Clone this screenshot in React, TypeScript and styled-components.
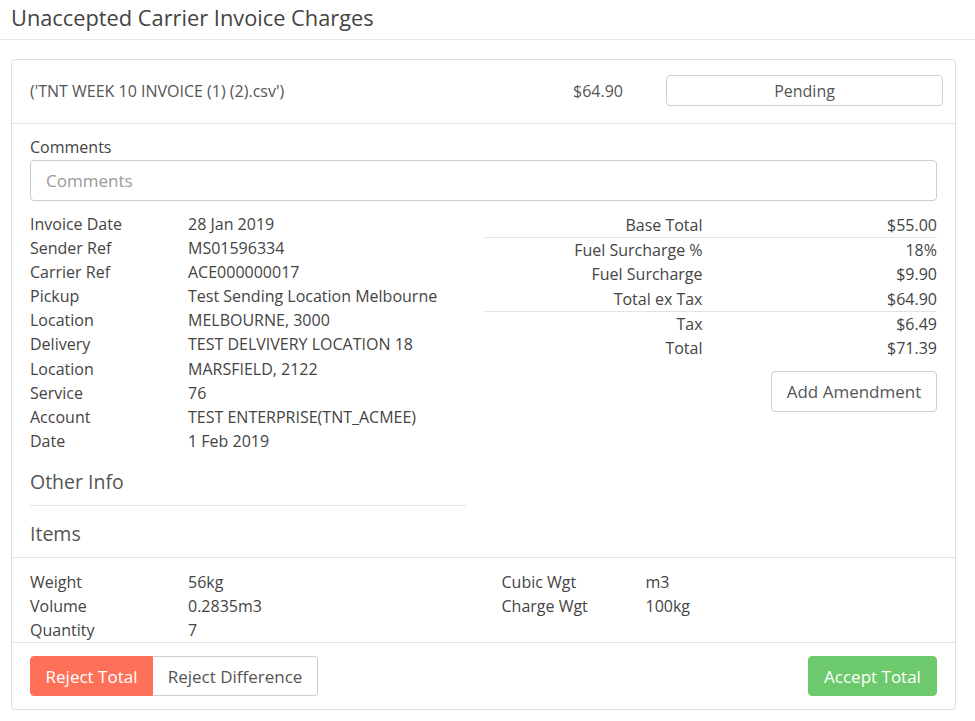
import styled, { createGlobalStyle } from "styled-components";

const GlobalStyle = createGlobalStyle`
  body {
    margin: 0;
    background: #ffffff;
    font-family: "Open Sans", "Liberation Sans", sans-serif;
    color: #555555;
  }
  * { box-sizing: border-box; }
`;

interface IDetail {
  label: string;
  value: string;
}

const details: IDetail[] = [
  { label: "Invoice Date", value: "28 Jan 2019" },
  { label: "Sender Ref", value: "MS01596334" },
  { label: "Carrier Ref", value: "ACE000000017" },
  { label: "Pickup", value: "Test Sending Location Melbourne" },
  { label: "Location", value: "MELBOURNE, 3000" },
  { label: "Delivery", value: "TEST DELVIVERY LOCATION 18" },
  { label: "Location", value: "MARSFIELD, 2122" },
  { label: "Service", value: "76" },
  { label: "Account", value: "TEST ENTERPRISE(TNT_ACMEE)" },
  { label: "Date", value: "1 Feb 2019" },
];

// groups split by a thin rule
const totals: IDetail[][] = [
  [{ label: "Base Total", value: "$55.00" }],
  [
    { label: "Fuel Surcharge %", value: "18%" },
    { label: "Fuel Surcharge", value: "$9.90" },
    { label: "Total ex Tax", value: "$64.90" },
  ],
  [
    { label: "Tax", value: "$6.49" },
    { label: "Total", value: "$71.39" },
  ],
];

const itemsLeft: IDetail[] = [
  { label: "Weight", value: "56kg" },
  { label: "Volume", value: "0.2835m3" },
  { label: "Quantity", value: "7" },
];

const itemsRight: IDetail[] = [
  { label: "Cubic Wgt", value: "m3" },
  { label: "Charge Wgt", value: "100kg" },
];

const App = () => {
  return (
    <>
      <GlobalStyle />
      <PageHeader>
        <Title>Unaccepted Carrier Invoice Charges</Title>
      </PageHeader>
      <Wrapper>
        <Card>
          <CardHeader>
            <FileName>('TNT WEEK 10 INVOICE (1) (2).csv')</FileName>
            <Amount>$64.90</Amount>
            <StatusButton>Pending</StatusButton>
          </CardHeader>

          <CardBody>
            <FieldLabel>Comments</FieldLabel>
            <CommentInput placeholder="Comments" />

            <Columns>
              <LeftCol>
                {details.map((d, i) => (
                  <DetailRow key={i} labelWidth={158}>
                    <span>{d.label}</span>
                    <span>{d.value}</span>
                  </DetailRow>
                ))}
                <SubHeading bordered>Other Info</SubHeading>
                <SubHeading>Items</SubHeading>
              </LeftCol>

              <RightCol>
                {totals.map((group, gi) => (
                  <TotalsGroup key={gi} first={gi === 0}>
                    {group.map((t) => (
                      <TotalRow key={t.label}>
                        <span>{t.label}</span>
                        <span>{t.value}</span>
                      </TotalRow>
                    ))}
                  </TotalsGroup>
                ))}
                <AmendRow>
                  <OutlineButton>Add Amendment</OutlineButton>
                </AmendRow>
              </RightCol>
            </Columns>
          </CardBody>

          <ItemsSection>
            <ItemsCol>
              {itemsLeft.map((d) => (
                <DetailRow key={d.label} labelWidth={158}>
                  <span>{d.label}</span>
                  <span>{d.value}</span>
                </DetailRow>
              ))}
            </ItemsCol>
            <ItemsCol indent>
              {itemsRight.map((d) => (
                <DetailRow key={d.label} labelWidth={144}>
                  <span>{d.label}</span>
                  <span>{d.value}</span>
                </DetailRow>
              ))}
            </ItemsCol>
          </ItemsSection>

          <CardFooter>
            <ButtonGroup>
              <ActionButton variant="danger">Reject Total</ActionButton>
              <ActionButton variant="plain">Reject Difference</ActionButton>
            </ButtonGroup>
            <ActionButton variant="success">Accept Total</ActionButton>
          </CardFooter>
        </Card>
      </Wrapper>
    </>
  );
};

const PageHeader = styled.div`
  height: 40px;
  padding: 0 11px;
  border-bottom: 1px solid #e6e6e6;
  display: flex;
  align-items: center;
`;

const Title = styled.h1`
  margin: 0 0 4px 0;
  font-size: 21.8px;
  font-weight: 400;
  line-height: 28px;
  color: #444;
`;

const Wrapper = styled.div`
  padding: 19px 19px 12px 11px;
`;

const Card = styled.div`
  border: 1px solid #dedede;
  border-radius: 4px;
  background: #fff;
`;

const CardHeader = styled.div`
  height: 64px;
  display: flex;
  align-items: center;
  padding: 0 12px 2px 18px;
  border-bottom: 1px solid #e3e3e3;
  font-size: 16px;
`;

const FileName = styled.div`
  flex: 1;
`;

const Amount = styled.div`
  margin-right: 43px;
`;

const StatusButton = styled.button`
  width: 277px;
  height: 31px;
  border: 1px solid #cfcfcf;
  border-radius: 4px;
  background: #fff;
  font-family: inherit;
  font-size: 16px;
  color: #555;
`;

const CardBody = styled.div`
  padding: 13px 18px 0 18px;
  border-bottom: 1px solid #e3e3e3;
`;

const FieldLabel = styled.div`
  font-size: 16px;
  line-height: 20px;
  color: #444;
`;

const CommentInput = styled.input`
  display: block;
  width: 100%;
  height: 41px;
  margin-top: 3px;
  padding: 0 15px;
  border: 1px solid #cdcdcd;
  border-radius: 4px;
  font-family: inherit;
  font-size: 17px;
  color: #555;
  &::placeholder {
    color: #9a9a9a;
  }
`;

const Columns = styled.div`
  display: grid;
  grid-template-columns: 1fr 1fr;
  margin-top: 11px;
`;

const LeftCol = styled.div`
  padding-right: 18px;
`;

const RightCol = styled.div`
  padding-top: 1px;
`;

const DetailRow = styled.div<{ labelWidth: number }>`
  display: grid;
  grid-template-columns: ${(p) => p.labelWidth}px 1fr;
  font-size: 16px;
  line-height: 24.1px;
  color: #444;
`;

const SubHeading = styled.h3<{ bordered?: boolean }>`
  margin: 0;
  font-size: 19.5px;
  font-weight: 400;
  line-height: 26px;
  color: #555;
  padding: ${(p) => (p.bordered ? "16px 0 10px" : "15px 0 10px")};
  border-bottom: ${(p) => (p.bordered ? "1px solid #e3e3e3" : "none")};
`;

const TotalsGroup = styled.div<{ first?: boolean }>`
  border-top: ${(p) => (p.first ? "none" : "1px solid #e3e3e3")};
`;

const TotalRow = styled.div`
  display: grid;
  grid-template-columns: 219px 1fr;
  font-size: 16px;
  line-height: 24.2px;
  color: #444;
  & > span {
    text-align: right;
  }
`;

const AmendRow = styled.div`
  display: flex;
  justify-content: flex-end;
  margin-top: 11px;
`;

const OutlineButton = styled.button`
  width: 166px;
  height: 41px;
  border: 1px solid #cdcdcd;
  border-radius: 4px;
  background: #fff;
  font-family: inherit;
  font-size: 17px;
  color: #555;
`;

const ItemsSection = styled.div`
  display: grid;
  grid-template-columns: 1fr 1fr;
  padding: 12px 18px 0 18px;
  border-bottom: 1px solid #e3e3e3;
`;

const ItemsCol = styled.div<{ indent?: boolean }>`
  padding-left: ${(p) => (p.indent ? "18px" : "0")};
`;

const CardFooter = styled.div`
  display: flex;
  justify-content: space-between;
  align-items: center;
  padding: 13px 18px 13px;
`;

const ButtonGroup = styled.div`
  display: flex;
`;

const variants = {
  danger: { bg: "#ff7059", color: "#fff", border: "#ff7059" },
  plain: { bg: "#fff", color: "#555", border: "#cdcdcd" },
  success: { bg: "#6cca6c", color: "#fff", border: "#6cca6c" },
};

const ActionButton = styled.button<{ variant: keyof typeof variants }>`
  height: 40px;
  padding: 0 12px;
  border: 1px solid ${(p) => variants[p.variant].border};
  background: ${(p) => variants[p.variant].bg};
  color: ${(p) => variants[p.variant].color};
  font-family: inherit;
  font-size: 17px;
  border-radius: 4px;
  ${ButtonGroup} > &:first-child {
    border-radius: 4px 0 0 4px;
    width: 123px;
  }
  ${ButtonGroup} > &:last-child {
    border-radius: 0 4px 4px 0;
    border-left: none;
    width: 165px;
  }
  ${(p) => (p.variant === "success" ? "width: 129px;" : "")}
`;

export default App;
